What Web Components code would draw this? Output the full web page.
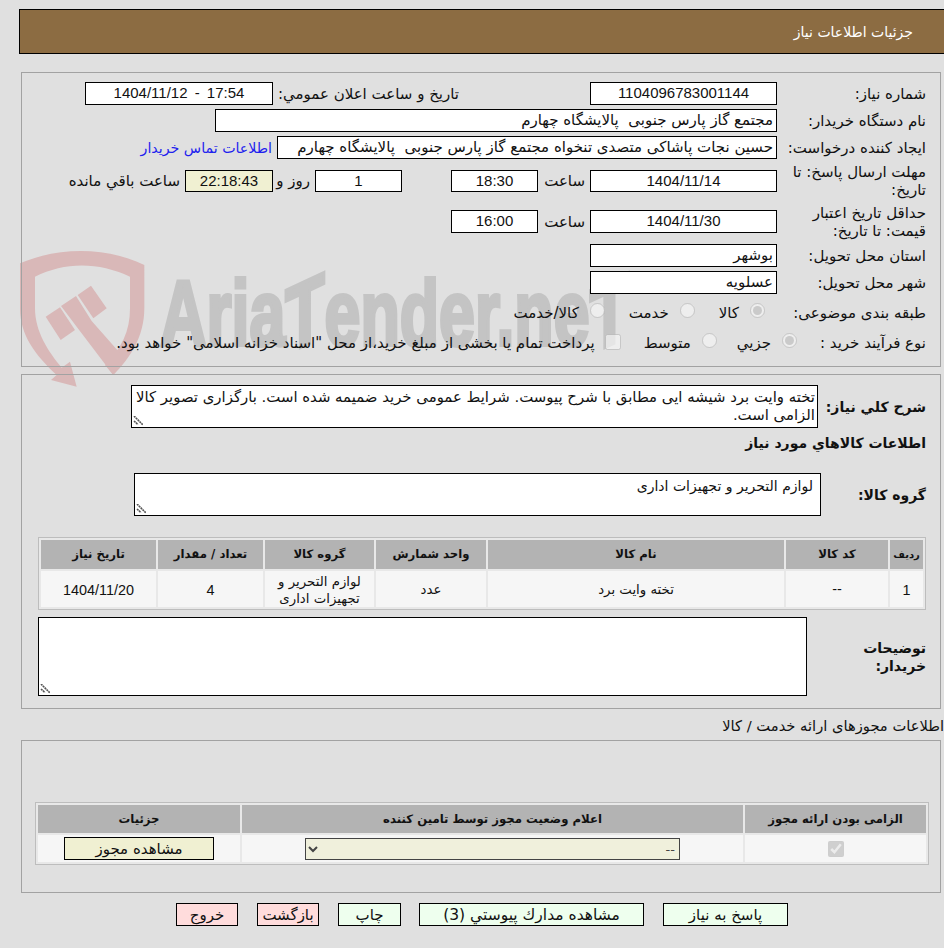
<!DOCTYPE html>
<html lang="fa" dir="rtl">
<head>
<meta charset="utf-8">
<title>جزئیات اطلاعات نیاز</title>
<style>
html, body { margin: 0; padding: 0; background: #e0e0e0; }
body { font: 15px "DejaVu Sans", sans-serif; color: #111; overflow: hidden; }
.num { font: 15px "Liberation Sans", sans-serif; }
.cnum { font: 14.4px "Liberation Sans", sans-serif; }
.t { white-space: nowrap; flex: none; }
.link { color: #2020ee; font-size: 14.2px; }
.pre { white-space: pre; }
</style>
</head>
<body>
<need-page>
	<need-watermark></need-watermark>
	<need-header>جزئیات اطلاعات نیاز</need-header>

	<need-panel top="18" h="295">
		<need-row top="9" col="163">
			<span slot="label">شماره نیاز:</span>
			<need-box><span class="num">1104096783001144</span></need-box>
			<span class="t" style="margin-right:126px;width:181px">تاریخ و ساعت اعلان عمومي:</span>
			<need-box w="188"><bdo dir="ltr" class="num" style="word-spacing:3px">1404/11/12 - 17:54</bdo></need-box>
		</need-row>
		<need-row top="4" col="163">
			<span slot="label">نام دستگاه خریدار:</span>
			<need-box w="562" start><span class="pre">مجتمع گاز پارس جنوبی  پالایشگاه چهارم</span></need-box>
		</need-row>
		<need-row top="4" col="163">
			<span slot="label">ایجاد کننده درخواست:</span>
			<need-box w="500" start><span class="pre">حسین نجات پاشاکی متصدی تنخواه مجتمع گاز پارس جنوبی  پالایشگاه چهارم</span></need-box>
			<span class="t link">اطلاعات تماس خریدار</span>
		</need-row>
		<need-row top="11" h="22" col="163">
			<span slot="label">مهلت ارسال پاسخ: تا تاریخ:</span>
			<need-box h="22"><span class="num">1404/11/14</span></need-box>
			<span class="t" style="width:42px">ساعت</span>
			<need-box w="87" h="22"><span class="num">18:30</span></need-box>
			<need-box w="87" h="22" style="margin-right:44px"><span class="num">1</span></need-box>
			<span class="t" style="width:28px">روز و</span>
			<need-box w="88" h="22" bg="#f0f0d2" style="margin-right:4px"><span class="num">22:18:43</span></need-box>
			<span class="t">ساعت باقي مانده</span>
		</need-row>
		<need-row top="18" col="163">
			<span slot="label">حداقل تاریخ اعتبار قیمت: تا تاریخ:</span>
			<need-box><span class="num">1404/11/30</span></need-box>
			<span class="t" style="width:42px">ساعت</span>
			<need-box w="87"><span class="num">16:00</span></need-box>
		</need-row>
		<need-row top="11" col="163">
			<span slot="label">استان محل تحویل:</span>
			<need-box start>بوشهر</need-box>
		</need-row>
		<need-row top="4" col="163">
			<span slot="label">شهر محل تحویل:</span>
			<need-box start>عسلویه</need-box>
		</need-row>
		<need-row top="7" col="163">
			<span slot="label">طبقه بندی موضوعی:</span>
			<need-radio on style="margin-right:12px">کالا</need-radio>
			<need-radio style="margin-right:19px">خدمت</need-radio>
			<need-radio style="margin-right:19px">کالا/خدمت</need-radio>
		</need-row>
		<need-row top="7" col="163">
			<span slot="label">نوع فرآیند خرید :</span>
			<need-radio on style="margin-right:-20px">جزيي</need-radio>
			<need-radio style="margin-right:15px">متوسط</need-radio>
			<input type="checkbox" disabled style="margin:0 18px 0 0;width:16px;height:16px;flex:none;position:relative;top:-1px">
			<span class="t" style="margin-right:5px">پرداخت تمام یا بخشی از مبلغ خرید،از محل "اسناد خزانه اسلامی" خواهد بود.</span>
		</need-row>
	</need-panel>

	<need-panel top="7" h="335">
		<need-row top="10" h="43" col="122" strong>
			<span slot="label">شرح كلي نياز:</span>
			<need-area w="687" h="43" style="font-size:14.9px">تخته وایت برد شیشه ایی مطابق با شرح پیوست. شرایط عمومی خرید ضمیمه شده است. بارگزاری تصویر کالا الزامی است.</need-area>
		</need-row>
		<need-row top="6" h="18" col="200" strong>
			<span slot="label" style="white-space:nowrap">اطلاعات كالاهاي مورد نياز</span>
		</need-row>
		<need-row top="21" h="43" col="119" strong>
			<span slot="label">گروه كالا:</span>
			<need-area w="687" h="43" inset>لوازم التحریر و تجهیزات اداری</need-area>
		</need-row>
		<need-table cols="33px 102px 296px 110px 109px 105px 115px" rows="29px 36px" style="margin:21px 14px 0 0;width:888px">
			<need-cell head style="font-size:10px">ردیف</need-cell>
			<need-cell head>کد کالا</need-cell>
			<need-cell head>نام کالا</need-cell>
			<need-cell head>واحد شمارش</need-cell>
			<need-cell head>گروه کالا</need-cell>
			<need-cell head>تعداد / مقدار</need-cell>
			<need-cell head>تاریخ نیاز</need-cell>
			<need-cell><span class="cnum">1</span></need-cell>
			<need-cell>--</need-cell>
			<need-cell>تخته وایت برد</need-cell>
			<need-cell>عدد</need-cell>
			<need-cell>لوازم التحریر و تجهیزات اداری</need-cell>
			<need-cell><span class="cnum">4</span></need-cell>
			<need-cell><span class="cnum">1404/11/20</span></need-cell>
		</need-table>
		<need-row top="7" h="79" col="133" strong>
			<span slot="label">توضیحات<br>خریدار:</span>
			<need-area w="769" h="79"></need-area>
		</need-row>
	</need-panel>

	<need-caption>اطلاعات مجوزهای ارائه خدمت / کالا</need-caption>

	<need-panel top="5" h="153">
		<need-table cols="181px 501px 202px" rows="28px 27px" style="margin:61px 11px 0 0;width:894px">
			<need-cell head>الزامی بودن ارائه مجوز</need-cell>
			<need-cell head>اعلام وضعیت مجوز توسط تامین کننده</need-cell>
			<need-cell head>جزئیات</need-cell>
			<need-cell><input type="checkbox" checked disabled style="margin:0;width:16px;height:16px"></need-cell>
			<need-cell><need-select></need-select></need-cell>
			<need-cell style="padding:0"><need-button w="150" bg="#f0f0d2">مشاهده مجوز</need-button></need-cell>
		</need-table>
	</need-panel>

	<need-actions>
		<need-button w="125">پاسخ به نیاز</need-button>
		<need-button w="225" style="font-size:15.5px">مشاهده مدارك پيوستي (3)</need-button>
		<need-button w="63" style="margin-right:-1px">چاپ</need-button>
		<need-button w="62" bg="#ffdcdc">بازگشت</need-button>
		<need-button w="62" bg="#ffdcdc">خروج</need-button>
	</need-actions>
</need-page>

<script>
	function shadow(el, html) {
		el.attachShadow({ mode: 'open' }).innerHTML = html;
	}

	class NeedPage extends HTMLElement {
		connectedCallback() {
			shadow(this, `<style>
				:host { display: block; position: relative; width: 944px; height: 948px; padding-top: 9px; box-sizing: border-box; overflow: hidden; }
			</style><slot></slot>`);
		}
	}

	class NeedHeader extends HTMLElement {
		connectedCallback() {
			shadow(this, `<style>
				:host { display: block; position: relative; z-index: 1; box-sizing: border-box; width: 925px; height: 45px; border: 1px solid #000; border-right: 0; background: #8c6c42; color: #fff; font-size: 14px; line-height: 44px; padding-right: 31px; }
			</style><slot></slot>`);
		}
	}

	class NeedPanel extends HTMLElement {
		connectedCallback() {
			const top = this.getAttribute('top');
			const h = this.getAttribute('h');
			shadow(this, `<style>
				:host { display: block; position: relative; z-index: 1; box-sizing: border-box; width: 920px; height: ${h}px; margin: ${top}px 3px 0 0; border: 1px solid #a2a2a2; }
			</style><slot></slot>`);
		}
	}

	class NeedRow extends HTMLElement {
		connectedCallback() {
			const top = this.getAttribute('top') || 0;
			const h = this.getAttribute('h') || 23;
			const col = this.getAttribute('col');
			const weight = this.hasAttribute('strong') ? 'bold 14px' : '15px';
			shadow(this, `<style>
				:host { display: flex; align-items: center; height: ${h}px; margin-top: ${top}px; }
				.l { flex: none; box-sizing: border-box; width: ${col}px; padding-right: 14px; font: ${weight} "DejaVu Sans", sans-serif; line-height: 18px; }
				.r { display: flex; align-items: center; gap: 5px; flex: 1; min-width: 0; }
			</style><div class="l"><slot name="label"></slot></div><div class="r"><slot></slot></div>`);
		}
	}

	class NeedBox extends HTMLElement {
		connectedCallback() {
			const w = this.getAttribute('w') || 187;
			const h = this.getAttribute('h') || 23;
			const bg = this.getAttribute('bg') || '#fff';
			const start = this.hasAttribute('start');
			shadow(this, `<style>
				:host { display: block; flex: none; box-sizing: border-box; width: ${w}px; height: ${h}px; border: 1px solid #000; background: ${bg}; line-height: ${h - 2}px; text-align: ${start ? 'right' : 'center'}; padding: 0 ${start ? 3 : 0}px; white-space: nowrap; overflow: hidden; }
			</style><slot></slot>`);
		}
	}

	class NeedArea extends HTMLElement {
		connectedCallback() {
			const w = this.getAttribute('w');
			const h = this.getAttribute('h');
			const pad = this.hasAttribute('inset') ? '3px 7px' : '2px 2px';
			shadow(this, `<style>
				:host { display: block; flex: none; position: relative; box-sizing: border-box; width: ${w}px; height: ${h}px; border: 1px solid #000; background: #fff; padding: ${pad}; font-size: 14px; line-height: 18px; overflow: hidden; }
				svg { position: absolute; left: 1px; bottom: 1px; }
			</style><slot></slot>
			<svg width="10" height="10" viewBox="0 0 10 10" fill="none" stroke="#555" stroke-width="1.6" stroke-dasharray="2 .6"><path d="M1 0L10 9M1 5L5 8.500"/></svg>`);
		}
	}

	class NeedRadio extends HTMLElement {
		connectedCallback() {
			const on = this.hasAttribute('on') ? 'checked' : '';
			shadow(this, `<style>
				:host { display: inline-flex; flex: none; align-items: center; gap: 11px; white-space: nowrap; }
				input { width: 15px; height: 15px; margin: 0; position: relative; top: -2px; }
			</style><input type="radio" disabled ${on}><slot></slot>`);
		}
	}

	class NeedTable extends HTMLElement {
		connectedCallback() {
			const cols = this.getAttribute('cols');
			const rows = this.getAttribute('rows');
			shadow(this, `<style>
				:host { display: grid; grid-template-columns: ${cols}; grid-template-rows: ${rows}; gap: 2px; box-sizing: border-box; padding: 2px; border: 1px solid #bdbdbd; background: #e8e8e8; }
			</style><slot></slot>`);
		}
	}

	class NeedCell extends HTMLElement {
		connectedCallback() {
			const head = this.hasAttribute('head');
			shadow(this, `<style>
				:host { display: flex; align-items: center; justify-content: center; text-align: center; padding: ${head ? '0' : '1px 8px 0'}; background: ${head ? '#b3b3b3' : '#f6f6f6'}; font: ${head ? 'bold 11.7px' : '13.3px'} "DejaVu Sans", sans-serif; line-height: 17px; white-space: ${head ? 'nowrap' : 'normal'}; }
			</style><slot></slot>`);
		}
	}

	class NeedSelect extends HTMLElement {
		connectedCallback() {
			shadow(this, `<style>
				:host { display: block; }
				select { display: block; box-sizing: border-box; width: 375px; height: 22px; margin: 0; border: 1px solid #444; background-color: #f0f0dc; color: #444; font: 13px "DejaVu Sans", sans-serif; }
			</style><select><option>--</option></select>`);
		}
	}

	class NeedButton extends HTMLElement {
		connectedCallback() {
			const w = this.getAttribute('w');
			const bg = this.getAttribute('bg') || '#eeffee';
			shadow(this, `<style>
				:host { display: block; flex: none; box-sizing: border-box; width: ${w}px; height: 23px; border: 1px solid #000; background: ${bg}; text-align: center; font: 15px/22px "DejaVu Sans", sans-serif; white-space: nowrap; overflow: hidden; }
			</style><slot></slot>`);
		}
	}

	class NeedCaption extends HTMLElement {
		connectedCallback() {
			shadow(this, `<style>
				:host { display: block; height: 18px; font-size: 14.7px; line-height: 18px; margin-top: 8px; white-space: nowrap; }
			</style><slot></slot>`);
		}
	}

	class NeedActions extends HTMLElement {
		connectedCallback() {
			shadow(this, `<style>
				:host { display: flex; gap: 19px; margin: 10px 156px 0 0; }
			</style><slot></slot>`);
		}
	}

	class NeedWatermark extends HTMLElement {
		connectedCallback() {
			shadow(this, `<style>
				:host { display: block; position: absolute; left: 15px; top: 245px; width: 620px; height: 150px; z-index: 0; }
				svg { position: absolute; left: 0; top: 0; }
				div { position: absolute; left: 145px; top: 18px; direction: ltr; white-space: nowrap; color: #c4c4c4; font: bold 92px "Liberation Sans Narrow", "Liberation Sans", sans-serif; line-height: 100px; -webkit-text-stroke: 4px #c4c4c4; transform-origin: 0 0; transform: scaleX(.7); }
				span { display: inline-block; transform: skewY(-18deg); }
			</style>
			<svg width="160" height="150" viewBox="0 0 480 450" fill="#d9b8b8">
				<path d="M15 55C130 5 275 5 388 60V190C388 275 345 340 295 390L270 360C320 310 345 260 345 190V95C250 50 150 50 60 95V190C60 260 100 320 140 368L165 350L185 425L108 405L125 390C60 330 15 270 15 190Z"/>
				<path d="M92 215L135 187L180 255L137 285Z"/>
				<path d="M138 183L183 153L230 228L320 330L295 390L185 245Z"/>
				<path d="M188 150L228 122L275 190L235 220Z"/>
			</svg>
			<div>Aria<span>T</span>ender.ne<span>T</span></div>`);
		}
	}

	customElements.define('need-page', NeedPage);
	customElements.define('need-header', NeedHeader);
	customElements.define('need-panel', NeedPanel);
	customElements.define('need-row', NeedRow);
	customElements.define('need-box', NeedBox);
	customElements.define('need-area', NeedArea);
	customElements.define('need-radio', NeedRadio);
	customElements.define('need-table', NeedTable);
	customElements.define('need-cell', NeedCell);
	customElements.define('need-select', NeedSelect);
	customElements.define('need-button', NeedButton);
	customElements.define('need-caption', NeedCaption);
	customElements.define('need-actions', NeedActions);
	customElements.define('need-watermark', NeedWatermark);
</script>
</body>
</html>
